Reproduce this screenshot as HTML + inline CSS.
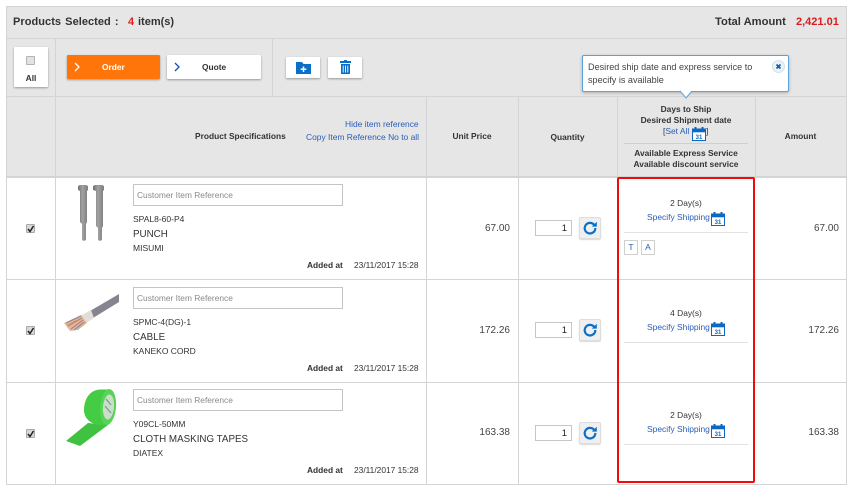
<!DOCTYPE html>
<html><head><meta charset="utf-8">
<style>
html,body{margin:0;padding:0;background:#fff;width:853px;height:492px;overflow:hidden}
body{font-family:"Liberation Sans",Arial,sans-serif;color:#333;position:relative}
#w{position:absolute;left:0;top:0;width:853px;height:492px;filter:blur(.3px)}
.a{position:absolute;white-space:nowrap}
.b{position:absolute;background:#d4d4d4}
.h{font-size:8.4px;font-weight:bold;color:#333;line-height:11px;text-align:center}
.l{color:#2a5db5;font-size:8.45px}
.btn{position:absolute;background:#fff;box-shadow:0 1px 2px rgba(0,0,0,.35);border-radius:1px}
.inp{position:absolute;left:133px;width:205px;height:20px;border:1px solid #c4c4c4;background:#fff;font-size:8.4px;color:#8a8a8a;line-height:20px;padding-left:3px;white-space:nowrap}
.qty{position:absolute;left:535px;width:31px;height:14px;border:1px solid #c6c6c6;font-size:9.5px;line-height:15px;text-align:right;color:#222;padding-right:4px;background:#fff}
.rf{position:absolute;left:579px;width:20px;height:20px;background:#efefef;border:1px solid #ddd;border-radius:2px;box-shadow:0 1px 1px rgba(0,0,0,.15)}
.cb{position:absolute;left:26px;width:7px;height:7px;background:#d8d8d8;border:1px solid #aaa;border-radius:1px}
.t9{font-size:8.4px;color:#333}
.num{font-size:10px;color:#444;text-align:right}
.sep{position:absolute;left:624px;width:124px;height:1px;background:#e2e2e2}
.tag{position:absolute;width:12px;height:13px;border:1px solid #d0d0d0;font-size:8.5px;color:#2a5db5;text-align:center;line-height:13px}
</style></head><body><div id="w">
<svg width="0" height="0" style="position:absolute"><defs>
<symbol id="cal" viewBox="0 0 14 14"><rect x="0.5" y="2" width="13" height="11.5" fill="#fff" stroke="#0a69c4"/><rect x="0" y="1.5" width="14" height="3.800" fill="#0a69c4"/><rect x="2.500" y="0" width="2" height="3" fill="#0a69c4"/><rect x="9.500" y="0" width="2" height="3" fill="#0a69c4"/><text x="7" y="12" font-size="6" font-weight="bold" text-anchor="middle" fill="#0a69c4" font-family="Liberation Sans">31</text></symbol>
<symbol id="rf" viewBox="0 0 14 14"><path d="M11.400 4.200A5.300 5.300 0 1 0 12.300 7" fill="none" stroke="#0a6fc9" stroke-width="2.200"/><path d="M8.800 5.600h5V.8z" fill="#0a6fc9"/></symbol>
</defs></svg>

<!-- header bands -->
<div class="a" style="left:6px;top:6px;width:841px;height:171px;background:#e6e6e6"></div>
<div class="b" style="left:6px;top:6px;width:841px;height:1px"></div>
<div class="b" style="left:6px;top:38px;width:841px;height:1px"></div>
<div class="b" style="left:6px;top:96px;width:841px;height:1px"></div>
<div class="b" style="left:6px;top:176px;width:841px;height:2px"></div>
<div class="b" style="left:6px;top:279px;width:841px;height:1px"></div>
<div class="b" style="left:6px;top:382px;width:841px;height:1px"></div>
<div class="b" style="left:6px;top:484px;width:841px;height:1px"></div>
<div class="b" style="left:6px;top:6px;width:1px;height:479px"></div>
<div class="b" style="left:846px;top:6px;width:1px;height:479px"></div>
<div class="b" style="left:55px;top:38px;width:1px;height:447px"></div>
<div class="b" style="left:272px;top:38px;width:1px;height:58px"></div>
<div class="b" style="left:426px;top:96px;width:1px;height:389px"></div>
<div class="b" style="left:518px;top:96px;width:1px;height:389px"></div>
<div class="b" style="left:617px;top:96px;width:1px;height:82px"></div>
<div class="b" style="left:755px;top:96px;width:1px;height:82px"></div>

<!-- top bar -->
<div class="a" style="left:13px;top:15px;font-size:11px;font-weight:bold;color:#333;line-height:14px;word-spacing:1px;letter-spacing:.05px">Products Selected :</div>
<div class="a" style="left:128px;top:15px;font-size:11px;font-weight:bold;color:#d81e1e;line-height:14px">4</div>
<div class="a" style="left:138px;top:15px;font-size:11px;font-weight:bold;color:#333;line-height:14px">item(s)</div>
<div class="a" style="left:715px;top:15px;font-size:11.2px;font-weight:bold;color:#333;line-height:14px">Total Amount</div>
<div class="a" style="left:796px;top:15px;font-size:11px;font-weight:bold;color:#d81e1e;line-height:14px">2,421.01</div>

<!-- toolbar -->
<div class="btn" style="left:14px;top:47px;width:34px;height:40px"></div>
<div class="a" style="left:26px;top:56px;width:7px;height:7px;background:#e2e2e2;border:1px solid #b4b4b4;border-radius:1px"></div>
<div class="a h" style="left:14px;top:73px;width:34px">All</div>
<div class="btn" style="left:67px;top:55px;width:93px;height:24px;background:#ff7509"></div>
<svg class="a" style="left:74px;top:62px" width="7" height="10"><path d="M1 1l4 4-4 4" fill="none" stroke="#fff" stroke-width="1.300"/></svg>
<div class="a h" style="left:102px;top:62px;color:#fff">Order</div>
<div class="btn" style="left:167px;top:55px;width:94px;height:24px"></div>
<svg class="a" style="left:174px;top:62px" width="7" height="10"><path d="M1 1l4 4-4 4" fill="none" stroke="#1253b5" stroke-width="1.300"/></svg>
<div class="a h" style="left:202px;top:62px">Quote</div>
<div class="btn" style="left:286px;top:57px;width:34px;height:21px"></div>
<svg class="a" style="left:296px;top:61px" width="15" height="13"><path d="M0 1h6l1.500 2H15v10H0z" fill="#0a6fc9"/><path d="M7.500 5.500v5.500M4.700 8.200h5.600" stroke="#fff" stroke-width="1.500"/></svg>
<div class="btn" style="left:328px;top:57px;width:34px;height:21px"></div>
<svg class="a" style="left:340px;top:60px" width="11" height="14"><path d="M4 0h3v1h4v2H0V1h4z" fill="#0a6fc9"/><path d="M1 4h9v10H1z" fill="#0a6fc9"/><path d="M3.200 5.500v7M5.500 5.500v7M7.800 5.500v7" stroke="#fff" stroke-width=".9"/></svg>

<!-- column headers -->
<div class="a h" style="left:195px;top:131px">Product Specifications</div>
<div class="a l" style="left:345px;top:119px">Hide item reference</div>
<div class="a l" style="left:306px;top:132px">Copy Item Reference No to all</div>
<div class="a h" style="left:426px;top:131px;width:92px">Unit Price</div>
<div class="a h" style="left:518px;top:132px;width:99px">Quantity</div>
<div class="a h" style="left:617px;top:104px;width:138px">Days to Ship</div>
<div class="a h" style="left:617px;top:115px;width:138px">Desired Shipment date</div>
<div class="a" style="left:663px;top:126px;font-size:8.45px;line-height:11px;color:#333">[<span class="l">Set All</span></div>
<svg class="a" style="left:692px;top:127px" width="14" height="14"><use href="#cal"/></svg>
<div class="a" style="left:706px;top:126px;font-size:8.45px;line-height:11px">]</div>
<div class="a" style="left:624px;top:143px;width:124px;height:1px;background:#cfcfcf"></div>
<div class="a h" style="left:617px;top:148px;width:138px">Available Express Service</div>
<div class="a h" style="left:617px;top:159px;width:138px">Available discount service</div>
<div class="a h" style="left:755px;top:131px;width:91px">Amount</div>

<!-- tooltip -->
<div class="a" style="left:582px;top:55px;width:205px;height:35px;background:#fff;border:1px solid #5aa2dc;border-radius:2px;box-shadow:0 1px 3px rgba(0,0,0,.25)"></div>
<svg class="a" style="left:680px;top:90px" width="13" height="9"><path d="M0 1l6 7 6-7" fill="#fff" stroke="#5aa2dc"/><rect x="1" y="0" width="10" height="1.400" fill="#fff"/></svg>
<div class="a" style="left:588px;top:61px;font-size:9.1px;line-height:12.7px;color:#444">Desired ship date and express service to<br>specify is available</div>
<svg class="a" style="left:772px;top:60px" width="13" height="13"><circle cx="6.500" cy="6.500" r="6" fill="#eaf1f8" stroke="#d5dfe8"/><path d="M4.500 4.500l4 4M8.500 4.500l-4 4" stroke="#0a5fb5" stroke-width="1.700"/></svg>

<!-- row 1 -->
<div class="cb" style="top:224px"></div><svg class="a" style="left:27px;top:225px" width="8" height="8"><path d="M1 4l2 2.500L6.500 1" fill="none" stroke="#222" stroke-width="1.500"/></svg>
<svg class="a" style="left:76px;top:184px" width="32" height="60">
<defs><linearGradient id="m" x1="0" x2="1"><stop offset="0" stop-color="#6f6f6f"/><stop offset=".45" stop-color="#a2a2a2"/><stop offset="1" stop-color="#7c7c7c"/></linearGradient></defs>
<path d="M2 3q0-2 3-2h4q3 0 3 2v3l-1 1V38l-1 2V56q-2 1.500-4 0V40l-2-2V7L2 6z" fill="url(#m)"/>
<path d="M17 3q0-2 3-2h5q3 0 3 2v3l-1 1V42l-1 2V56q-2 1.500-4 0V44l-2-2V7L17 6z" fill="url(#m)"/>
</svg>
<div class="inp" style="top:184px">Customer Item Reference</div>
<div class="a t9" style="left:133px;top:214px;font-size:8.5px">SPAL8-60-P4</div>
<div class="a" style="left:133px;top:229px;font-size:9.8px;color:#333">PUNCH</div>
<div class="a t9" style="left:133px;top:243px;font-size:8.500px">MISUMI</div>
<div class="a h" style="left:307px;top:260px">Added at</div>
<div class="a t9" style="left:354px;top:260px">23/11/2017 15:28</div>
<div class="a num" style="left:440px;top:223px;width:70px">67.00</div>
<div class="qty" style="top:220px">1</div>
<div class="rf" style="top:217px"><svg style="position:absolute;left:3px;top:3px" width="14" height="14"><use href="#rf"/></svg></div>
<div class="a t9" style="left:617px;top:198px;width:138px;text-align:center">2 Day(s)</div>
<div class="a l" style="left:647px;top:212px">Specify Shipping</div>
<svg class="a" style="left:711px;top:212px" width="14" height="14"><use href="#cal"/></svg>
<div class="sep" style="top:232px"></div>
<div class="tag" style="left:624px;top:240px">T</div>
<div class="tag" style="left:641px;top:240px">A</div>
<div class="a num" style="left:769px;top:223px;width:70px">67.00</div>

<!-- row 2 -->
<div class="cb" style="top:326px"></div><svg class="a" style="left:27px;top:327px" width="8" height="8"><path d="M1 4l2 2.500L6.500 1" fill="none" stroke="#222" stroke-width="1.500"/></svg>
<svg class="a" style="left:62px;top:292px" width="60" height="46">
<path d="M28 19L57 2v8L31 26z" fill="#85858f"/>
<path d="M18 24l11-6 3 8-8 5z" fill="#e2dfd8"/>
<path d="M2 31L19 23l6 8-9 7-8 1z" fill="#d9b8a4"/>
<path d="M4 31l15-7M6 34l14-8M9 37l12-9" stroke="#c96a6a" stroke-width=".9"/>
<path d="M8 29l11-5M12 38l10-8" stroke="#6f8dab" stroke-width=".9"/>
<path d="M5 33l14-7M15 37l8-7" stroke="#d9a04e" stroke-width=".8"/>
</svg>
<div class="inp" style="top:287px">Customer Item Reference</div>
<div class="a t9" style="left:133px;top:317px;font-size:8.5px">SPMC-4(DG)-1</div>
<div class="a" style="left:133px;top:332px;font-size:9.8px;color:#333">CABLE</div>
<div class="a t9" style="left:133px;top:346px;font-size:8.500px">KANEKO CORD</div>
<div class="a h" style="left:307px;top:363px">Added at</div>
<div class="a t9" style="left:354px;top:363px">23/11/2017 15:28</div>
<div class="a num" style="left:440px;top:325px;width:70px">172.26</div>
<div class="qty" style="top:322px">1</div>
<div class="rf" style="top:319px"><svg style="position:absolute;left:3px;top:3px" width="14" height="14"><use href="#rf"/></svg></div>
<div class="a t9" style="left:617px;top:308px;width:138px;text-align:center">4 Day(s)</div>
<div class="a l" style="left:647px;top:322px">Specify Shipping</div>
<svg class="a" style="left:711px;top:322px" width="14" height="14"><use href="#cal"/></svg>
<div class="sep" style="top:342px"></div>
<div class="a num" style="left:769px;top:325px;width:70px">172.26</div>

<!-- row 3 -->
<div class="cb" style="top:429px"></div><svg class="a" style="left:27px;top:430px" width="8" height="8"><path d="M1 4l2 2.500L6.500 1" fill="none" stroke="#222" stroke-width="1.500"/></svg>
<svg class="a" style="left:64px;top:388px" width="56" height="60">
<path d="M2 53L24 35l20 2L16 58z" fill="#3fc23f"/>
<path d="M36 1.500C25 2 20 12 20 22C20 30 26 36 36 37L44 37L44 1.500z" fill="#44cc44"/>
<ellipse cx="44" cy="19" rx="8" ry="18" transform="rotate(5 44 19)" fill="#55d455"/>
<ellipse cx="44.500" cy="19" rx="5.500" ry="12.500" transform="rotate(5 44.500 19)" fill="#cfdcc6"/>
<path d="M42 11l5 6M41 18l6 7" stroke="#6fa09f" stroke-width="1.300"/>
</svg>
<div class="inp" style="top:389px">Customer Item Reference</div>
<div class="a t9" style="left:133px;top:419px;font-size:8.5px">Y09CL-50MM</div>
<div class="a" style="left:133px;top:434px;font-size:9.8px;color:#333">CLOTH MASKING TAPES</div>
<div class="a t9" style="left:133px;top:448px;font-size:8.500px">DIATEX</div>
<div class="a h" style="left:307px;top:465px">Added at</div>
<div class="a t9" style="left:354px;top:465px">23/11/2017 15:28</div>
<div class="a num" style="left:440px;top:427px;width:70px">163.38</div>
<div class="qty" style="top:425px">1</div>
<div class="rf" style="top:422px"><svg style="position:absolute;left:3px;top:3px" width="14" height="14"><use href="#rf"/></svg></div>
<div class="a t9" style="left:617px;top:410px;width:138px;text-align:center">2 Day(s)</div>
<div class="a l" style="left:647px;top:424px">Specify Shipping</div>
<svg class="a" style="left:711px;top:424px" width="14" height="14"><use href="#cal"/></svg>
<div class="sep" style="top:444px"></div>
<div class="a num" style="left:769px;top:427px;width:70px">163.38</div>

<!-- red highlight -->
<div class="a" style="left:617px;top:177px;width:134px;height:302px;border:2px solid #f00c0c;border-radius:2px"></div>
</div></body></html>
